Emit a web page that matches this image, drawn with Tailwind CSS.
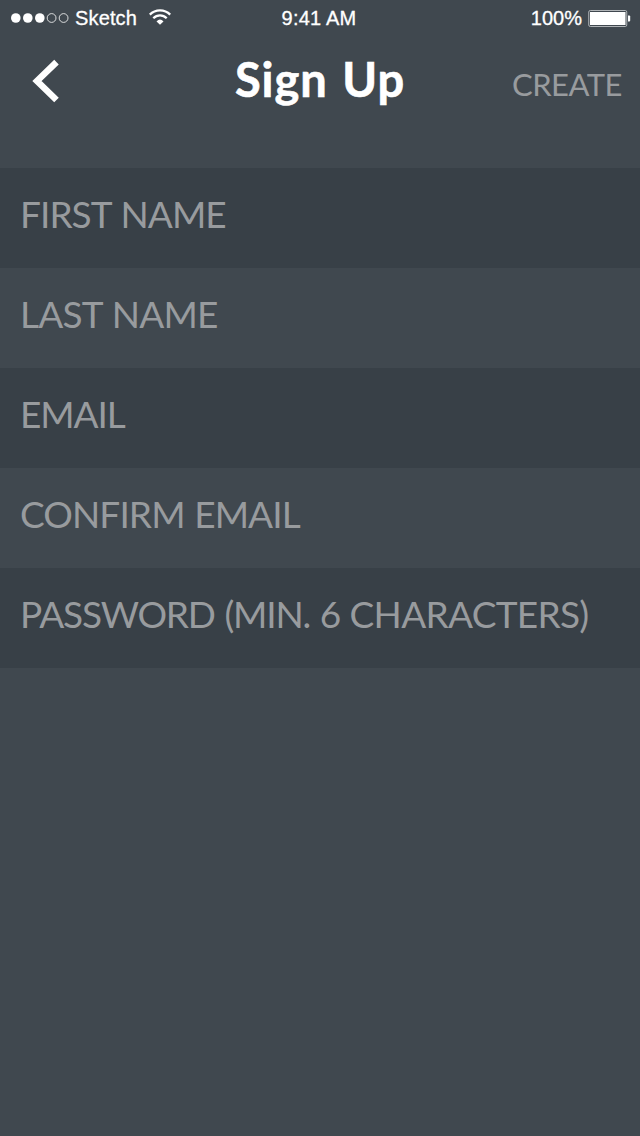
<!DOCTYPE html>
<html lang="en">
<head>
<meta charset="utf-8">
<title>Sign Up</title>
<script src="https://cdn.jsdelivr.net/npm/@tailwindcss/browser@4"></script>
</head>
<body class="w-[640px] h-[1136px] overflow-hidden bg-[#40484f] font-['Lato',sans-serif] text-[#989b9e]">
<header class="h-[168px] text-white">
  <div class="grid grid-cols-3 h-9 items-center pl-[11px] pr-[9px] font-['Liberation_Sans',sans-serif] text-[20px] leading-9 whitespace-nowrap [-webkit-text-stroke:0.3px_white]">
    <div class="flex items-center">
      <svg class="w-[58px] h-[10px] shrink-0" viewBox="0 0 58 10" fill="white"><circle cx="4.8" cy="5" r="4.8"/><circle cx="16.8" cy="5" r="4.8"/><circle cx="28.8" cy="5" r="4.8"/><g fill="none" stroke="white" stroke-width=".8"><circle cx="40.6" cy="5" r="4.4"/><circle cx="52.6" cy="5" r="4.4"/></g></svg>
      <span class="ml-[6px] w-[62px] tracking-[0.15px]">Sketch</span>
      <svg class="ml-3 w-[22px] h-4 shrink-0 -mt-0.5" viewBox="0 0 22 16" fill="none" stroke="white" stroke-width="2.300"><path d="M.8 5.600Q5 1.400 11 1.400T21.200 5.600"/><path d="M4.300 9.200Q7.200 6.300 11 6.300T17.700 9.200"/><path d="M7.500 12.400Q9.200 10.600 11 10.600T14.500 12.400L11 15.800Z" fill="white" stroke="none"/></svg>
    </div>
    <span class="text-center pr-[4px] tracking-[0.2px]">9:41 AM</span>
    <div class="flex items-center justify-end">
      <span>100%</span>
      <svg class="ml-[6px] w-[43px] h-[17px]" viewBox="0 0 43 17"><rect x=".75" y=".5" width="38" height="16" rx="1.500" fill="none" stroke="#b0b4b7"/><rect x="2" y="2" width="35.500" height="13" fill="white"/><path d="M40 5.500h1.200q1 0 1 1v4q0 1-1 1H40z" fill="white"/></svg>
    </div>
  </div>
  <div class="grid grid-cols-[1fr_auto_1fr] h-[90px] items-center pl-[18px] pr-[18px]">
    <svg class="ml-[14px] w-7 h-[44px]" viewBox="0 0 28 44" fill="none" stroke="white" stroke-width="6.500"><path d="M24.500 3.200L5 22L24.500 41"/></svg>
    <h1 class="text-[47px] font-bold whitespace-nowrap tracking-[1px] [word-spacing:2px] pb-[4px] [-webkit-text-stroke:0.6px_white]">Sign Up</h1>
    <span class="text-right text-[31px] text-[#989b9e] tracking-[-0.5px] pt-[6px]">CREATE</span>
  </div>
</header>
<main class="text-[37px] leading-[92px] whitespace-nowrap">
  <div class="h-[100px] pl-5 bg-[#384047] leading-[91px] tracking-[-0.95px] [word-spacing:1.5px]">FIRST NAME</div>
  <div class="h-[100px] pl-5 tracking-[-0.8px] [word-spacing:1.5px]">LAST NAME</div>
  <div class="h-[100px] pl-5 bg-[#384047] tracking-[-1.1px]">EMAIL</div>
  <div class="h-[100px] pl-5 tracking-[-0.9px] [word-spacing:1px]">CONFIRM EMAIL</div>
  <div class="h-[100px] pl-5 bg-[#384047] tracking-[-1.2px] [word-spacing:1.4px]">PASSWORD (MIN. 6 <span class="tracking-[-0.7px]">CHARACTERS)</span></div>
</main>
</body>
</html>
